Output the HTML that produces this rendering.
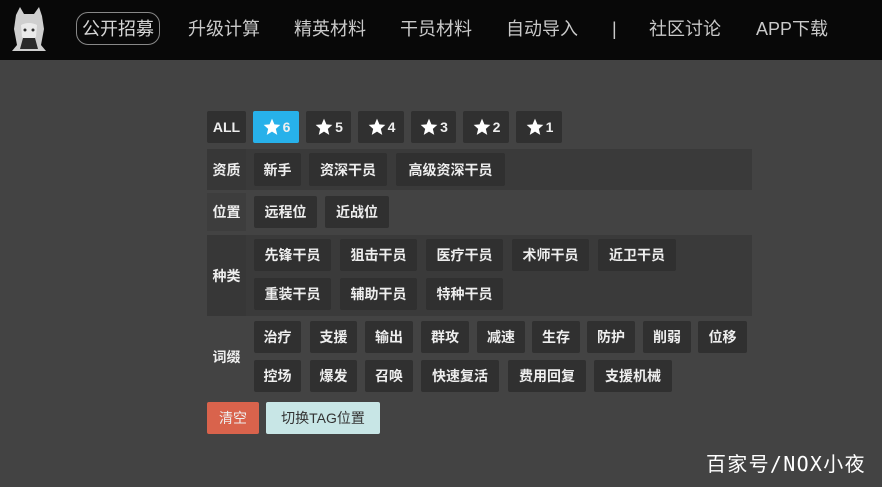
<!DOCTYPE html>
<html><head><meta charset="utf-8">
<style>
*{margin:0;padding:0;box-sizing:border-box}
body{width:882px;height:487px;background:#434343;position:relative;overflow:hidden;font-family:"Liberation Sans","Noto Sans CJK SC",sans-serif}
.hd{position:absolute;left:0;top:0;width:882px;height:60px;background:#080808}
.nav{position:absolute;top:16px;font-size:18px;color:#c9c9c9;line-height:26px;white-space:nowrap}
.pill{position:absolute;left:76px;top:12px;width:84px;height:33px;border:1px solid #888;border-radius:12px}
.band{position:absolute;left:207px;width:545px;background:#3a3a3a}
.lab{position:absolute;left:207px;width:39px;background:#373737;color:#eee;font-size:14px;font-weight:bold;display:flex;align-items:center;justify-content:center}
.b{position:absolute;background:#303030;color:#eee;font-size:14px;font-weight:bold;display:flex;align-items:center;justify-content:center;border-radius:2px;white-space:nowrap}
.s{height:32px;top:111px;font-size:14px}
.s svg{width:20px;height:20px;margin-right:1px}
</style></head><body>
<div class="hd"></div>
<svg style="position:absolute;left:8px;top:5px" width="42" height="48" viewBox="0 0 42 48">
<path d="M8 10 L12 2 L16 9 L26 9 L31 2 L34 11 L36 24 L33 40 L38 46 L4 46 L9 40 L6 24 Z" fill="#cfcfcf"/>
<path d="M13 20 Q21 16 29 20 L28 32 Q21 38 14 32 Z" fill="#eaeaea"/>
<path d="M15 33 L27 33 L30 44 L12 44 Z" fill="#2a2a2a"/>
<circle cx="17" cy="25" r="1.5" fill="#333"/><circle cx="25" cy="25" r="1.5" fill="#333"/>
</svg>
<div class="pill"></div>
<div class="nav" style="left:82px;color:#d6d6d6">公开招募</div>
<div class="nav" style="left:188px">升级计算</div>
<div class="nav" style="left:294px">精英材料</div>
<div class="nav" style="left:400px">干员材料</div>
<div class="nav" style="left:506px">自动导入</div>
<div class="nav" style="left:612px">|</div>
<div class="nav" style="left:649px">社区讨论</div>
<div class="nav" style="left:756px">APP下载</div>

<div class="b s" style="left:207px;width:39px">ALL</div>
<div class="b s" style="left:253px;width:46px;background:#27b1ea"><svg viewBox="0 0 24 24"><path d="M12 2l2.9 6.9 7.1.6-5.4 4.7 1.7 7.3L12 17.6 5.7 21.5l1.7-7.3L2 9.5l7.1-.6z" fill="#fff"/></svg>6</div>
<div class="b s" style="left:306px;width:45px"><svg viewBox="0 0 24 24"><path d="M12 2l2.9 6.9 7.1.6-5.4 4.7 1.7 7.3L12 17.6 5.7 21.5l1.7-7.3L2 9.5l7.1-.6z" fill="#fff"/></svg>5</div>
<div class="b s" style="left:358px;width:46px"><svg viewBox="0 0 24 24"><path d="M12 2l2.9 6.9 7.1.6-5.4 4.7 1.7 7.3L12 17.6 5.7 21.5l1.7-7.3L2 9.5l7.1-.6z" fill="#fff"/></svg>4</div>
<div class="b s" style="left:411px;width:45px"><svg viewBox="0 0 24 24"><path d="M12 2l2.9 6.9 7.1.6-5.4 4.7 1.7 7.3L12 17.6 5.7 21.5l1.7-7.3L2 9.5l7.1-.6z" fill="#fff"/></svg>3</div>
<div class="b s" style="left:463px;width:46px"><svg viewBox="0 0 24 24"><path d="M12 2l2.9 6.9 7.1.6-5.4 4.7 1.7 7.3L12 17.6 5.7 21.5l1.7-7.3L2 9.5l7.1-.6z" fill="#fff"/></svg>2</div>
<div class="b s" style="left:516px;width:46px"><svg viewBox="0 0 24 24"><path d="M12 2l2.9 6.9 7.1.6-5.4 4.7 1.7 7.3L12 17.6 5.7 21.5l1.7-7.3L2 9.5l7.1-.6z" fill="#fff"/></svg>1</div>

<div class="band" style="top:149px;height:41px"></div>
<div class="lab" style="top:149px;height:41px">资质</div>
<div class="b" style="left:254px;top:153px;width:47px;height:33px">新手</div>
<div class="b" style="left:309px;top:153px;width:78px;height:33px">资深干员</div>
<div class="b" style="left:396px;top:153px;width:109px;height:33px">高级资深干员</div>

<div class="lab" style="top:193px;height:38px;background:#3d3d3d">位置</div>
<div class="b" style="left:254px;top:196px;width:63px;height:32px">远程位</div>
<div class="b" style="left:325px;top:196px;width:64px;height:32px">近战位</div>

<div class="band" style="top:235px;height:81px"></div>
<div class="lab" style="top:235px;height:81px">种类</div>
<div class="b" style="left:254px;top:239px;width:77px;height:32px">先锋干员</div>
<div class="b" style="left:340px;top:239px;width:77px;height:32px">狙击干员</div>
<div class="b" style="left:426px;top:239px;width:77px;height:32px">医疗干员</div>
<div class="b" style="left:512px;top:239px;width:77px;height:32px">术师干员</div>
<div class="b" style="left:598px;top:239px;width:78px;height:32px">近卫干员</div>
<div class="b" style="left:254px;top:278px;width:77px;height:32px">重装干员</div>
<div class="b" style="left:340px;top:278px;width:77px;height:32px">辅助干员</div>
<div class="b" style="left:426px;top:278px;width:77px;height:32px">特种干员</div>

<div class="lab" style="top:318px;height:78px;background:transparent">词缀</div>
<div class="b" style="left:254px;top:321px;width:47px;height:32px">治疗</div>
<div class="b" style="left:310px;top:321px;width:47px;height:32px">支援</div>
<div class="b" style="left:365px;top:321px;width:48px;height:32px">输出</div>
<div class="b" style="left:421px;top:321px;width:48px;height:32px">群攻</div>
<div class="b" style="left:477px;top:321px;width:48px;height:32px">减速</div>
<div class="b" style="left:532px;top:321px;width:48px;height:32px">生存</div>
<div class="b" style="left:587px;top:321px;width:48px;height:32px">防护</div>
<div class="b" style="left:643px;top:321px;width:48px;height:32px">削弱</div>
<div class="b" style="left:698px;top:321px;width:49px;height:32px">位移</div>
<div class="b" style="left:254px;top:360px;width:47px;height:32px">控场</div>
<div class="b" style="left:310px;top:360px;width:47px;height:32px">爆发</div>
<div class="b" style="left:365px;top:360px;width:48px;height:32px">召唤</div>
<div class="b" style="left:421px;top:360px;width:78px;height:32px">快速复活</div>
<div class="b" style="left:508px;top:360px;width:78px;height:32px">费用回复</div>
<div class="b" style="left:594px;top:360px;width:78px;height:32px">支援机械</div>

<div class="b" style="left:207px;top:402px;width:52px;height:32px;background:#d9634c;font-weight:normal;font-size:14px">清空</div>
<div class="b" style="left:266px;top:402px;width:114px;height:32px;background:#c8e6e6;color:#333;font-weight:normal;font-size:14px">切换TAG位置</div>

<div style="position:absolute;left:706px;top:448px;font-size:20px;color:#fff;font-family:'DejaVu Sans Mono','Noto Sans CJK SC',monospace;white-space:nowrap;letter-spacing:1.3px">百家号/NOX小夜</div>
</body></html>
